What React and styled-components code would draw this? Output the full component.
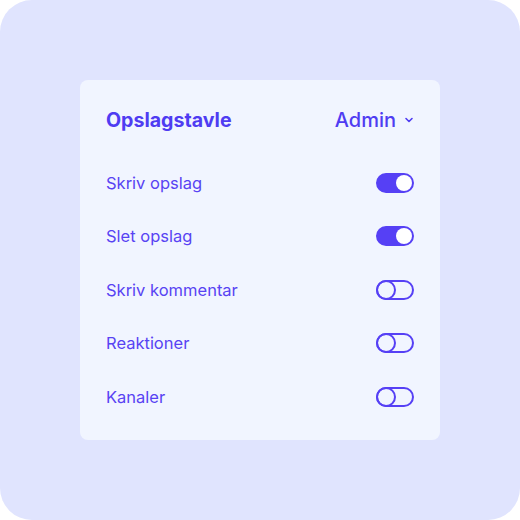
import React, { useState } from 'react';
import styled, { createGlobalStyle } from 'styled-components';

const GlobalStyle = createGlobalStyle`
  body {
    margin: 0;
    background: #ffffff;
    font-family: Inter, "Noto Sans", sans-serif;
  }
`;

const Frame = styled.div`
  width: 520px;
  height: 520px;
  background: #e0e4fe;
  border-radius: 32px;
  display: flex;
  align-items: center;
  justify-content: center;
`;

const Card = styled.div`
  width: 360px;
  height: 360px;
  box-sizing: border-box;
  background: #f1f5ff;
  border-radius: 8px;
  padding: 26px 26px 16px;
  display: flex;
  flex-direction: column;
`;

const Header = styled.div`
  height: 28px;
  display: flex;
  align-items: center;
  justify-content: space-between;
  margin-bottom: 22px;
  color: #4f3cf2;
`;

const Title = styled.h2`
  margin: 0;
  font-size: 19.6px;
  font-weight: 700;
`;

const RoleSelect = styled.button`
  display: flex;
  align-items: center;
  gap: 8px;
  border: 0;
  padding: 0;
  background: none;
  font: inherit;
  font-size: 20px;
  font-weight: 500;
  color: inherit;
  cursor: pointer;
`;

const Row = styled.div`
  height: 53.5px;
  display: flex;
  align-items: center;
  justify-content: space-between;
`;

const Label = styled.span`
  font-size: 16.5px;
  color: #5843f3;
`;

const Toggle = styled.button`
  position: relative;
  width: 38px;
  height: 20px;
  box-sizing: border-box;
  padding: 0;
  border: 2px solid #5640f5;
  border-radius: 10px;
  background: ${(p) => (p.$on ? '#5640f5' : 'transparent')};
  cursor: pointer;
`;

const Knob = styled.span`
  position: absolute;
  top: ${(p) => (p.$on ? '0' : '-2px')};
  left: ${(p) => (p.$on ? '18px' : '-2px')};
  width: ${(p) => (p.$on ? '16px' : '20px')};
  height: ${(p) => (p.$on ? '16px' : '20px')};
  box-sizing: border-box;
  border-radius: 50%;
  background: ${(p) => (p.$on ? '#ffffff' : 'transparent')};
  border: ${(p) => (p.$on ? '0' : '2px solid #5640f5')};
`;

const permissions = [
  { label: 'Skriv opslag', on: true },
  { label: 'Slet opslag', on: true },
  { label: 'Skriv kommentar', on: false },
  { label: 'Reaktioner', on: false },
  { label: 'Kanaler', on: false },
];

export default function App() {
  const [items, setItems] = useState(permissions);

  const flip = (i) =>
    setItems(items.map((it, idx) => (idx === i ? { ...it, on: !it.on } : it)));

  return (
    <Frame>
      <GlobalStyle />
      <Card>
        <Header>
          <Title>Opslagstavle</Title>
          <RoleSelect>
            Admin
            <svg width="10" height="10" viewBox="0 0 10 10" fill="none">
              <path d="M2 3.5L5 6.5L8 3.5" stroke="currentColor" strokeWidth="1.6" strokeLinecap="round" strokeLinejoin="round" />
            </svg>
          </RoleSelect>
        </Header>
        {items.map((item, i) => (
          <Row key={item.label}>
            <Label>{item.label}</Label>
            <Toggle $on={item.on} onClick={() => flip(i)}>
              <Knob $on={item.on} />
            </Toggle>
          </Row>
        ))}
      </Card>
    </Frame>
  );
}
